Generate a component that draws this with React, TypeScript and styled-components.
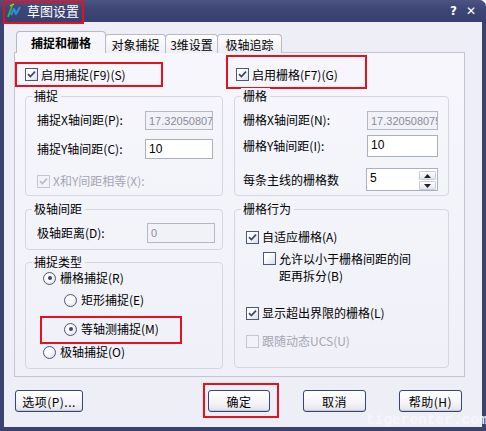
import React from "react";
import styled, { createGlobalStyle, css } from "styled-components";

const Global = createGlobalStyle`
  html, body { margin: 0; padding: 0; background: #ffffff; }
  body { font-family: "Noto Sans CJK SC", "Noto Sans", sans-serif; font-size: 12px; color: #000; }
  * { box-sizing: border-box; }
`;

const FONT = `"Noto Sans CJK SC", "Noto Sans", sans-serif`;

const Window = styled.div`
  position: relative;
  width: 486px;
  height: 431px;
  display: flex;
  flex-direction: column;
  background: #3a4270;
  border-radius: 0 7px 0 0;
  overflow: hidden;
  padding: 0 4px 4px 4px;
`;

const TitleBar = styled.div`
  height: 22px;
  flex: none;
  margin: 0 -4px;
  padding: 0 10px 0 6px;
  display: flex;
  align-items: center;
  background: linear-gradient(#4b5483 0%, #3e4676 40%, #384070 100%);
`;

const TitleGroup = styled.div`
  position: relative;
  display: flex;
  align-items: center;
  gap: 5px;
  height: 16px;
`;

const TitleText = styled.span`
  color: #ffffff;
  font-size: 13px;
  line-height: 16px;
`;

const TitleButtons = styled.div`
  margin-left: auto;
  display: flex;
  gap: 9px;
  color: #ffffff;
  font-family: "DejaVu Sans", sans-serif;
  font-weight: bold;
  font-size: 12px;
`;

const Highlight = styled.span<{ $l: number; $t: number; $w: number; $h: number }>`
  position: absolute;
  left: ${(p) => p.$l}px;
  top: ${(p) => p.$t}px;
  width: ${(p) => p.$w}px;
  height: ${(p) => p.$h}px;
  border: 2px solid #e4121e;
  pointer-events: none;
`;

const Client = styled.div`
  flex: 1;
  background: #eeeef7;
  padding: 9px 17px 0 10px;
  display: flex;
  flex-direction: column;
`;

const TabStrip = styled.div`
  display: flex;
  align-items: flex-end;
  height: 22px;
  padding-left: 2px;
  margin-bottom: -1px;
  position: relative;
  z-index: 1;
`;

const Tab = styled.div<{ $active?: boolean; $w: number }>`
  width: ${(p) => p.$w}px;
  display: flex;
  align-items: center;
  justify-content: center;
  border: 1px solid #b8b8c8;
  border-bottom: none;
  border-radius: 4px 4px 0 0;
  font-size: 12px;
  line-height: 14px;
  padding-top: 1px;
  ${(p) =>
    p.$active
      ? css`
          background: #f5f5fb;
          font-weight: bold;
          height: 22px;
        `
      : css`
          height: 19px;
          background: linear-gradient(#ffffff, #ededf4);
          margin-left: -1px;
        `}
`;

const Panel = styled.div`
  width: 451px;
  height: 325px;
  border: 1px solid #c4c4d0;
  background: linear-gradient(#f6f6fc, #f0f0f8);
  display: grid;
  grid-template-columns: 198px 215px;
  column-gap: 11px;
  padding: 14px 0 0 10px;
  align-content: start;
`;

const Column = styled.div`
  display: flex;
  flex-direction: column;
`;

const Row = styled.div<{ $h: number; $mt?: number; $indent?: number }>`
  position: relative;
  display: flex;
  align-items: center;
  height: ${(p) => p.$h}px;
  margin-top: ${(p) => p.$mt ?? 0}px;
  padding-left: ${(p) => p.$indent ?? 0}px;
  flex: none;
`;

const Group = styled.div<{ $h: number; $mt: number; $pt: number }>`
  position: relative;
  height: ${(p) => p.$h}px;
  margin-top: ${(p) => p.$mt}px;
  padding-top: ${(p) => p.$pt}px;
  border: 1px solid #d6d6e0;
  border-radius: 4px;
  display: flex;
  flex-direction: column;
`;

const Legend = styled.span`
  position: absolute;
  top: -9px;
  left: 6px;
  padding: 0 3px 0 2px;
  background: #f3f3fa;
  font-size: 12px;
  line-height: 16px;
`;

const Label = styled.span<{ $disabled?: boolean }>`
  font-size: 12px;
  line-height: 14px;
  white-space: nowrap;
  color: ${(p) => (p.$disabled ? "#a6a6b4" : "#000")};
`;

const WrapLabel = styled.span`
  font-size: 12px;
  line-height: 17px;
  width: 136px;
  align-self: flex-start;
  margin-top: -1px;
`;

const Field = styled.div<{ $w: number; $h: number; $disabled?: boolean; $mr: number }>`
  margin-left: auto;
  margin-right: ${(p) => p.$mr}px;
  width: ${(p) => p.$w}px;
  height: ${(p) => p.$h}px;
  border: 1px solid ${(p) => (p.$disabled ? "#b4b8c4" : "#a9b0bf")};
  background: ${(p) => (p.$disabled ? "#f1f1f8" : "#ffffff")};
  color: ${(p) => (p.$disabled ? "#8c8c98" : "#000")};
  font-family: "Liberation Sans", Arial, sans-serif;
  font-size: ${(p) => (p.$disabled ? 11 : 12)}px;
  line-height: 16px;
  padding: 1px 0 0 3px;
  overflow: hidden;
  white-space: nowrap;
  display: flex;
  align-items: flex-start;
`;

const SpinWrap = styled.div`
  margin-left: auto;
  display: flex;
  flex-direction: column;
  gap: 1px;
  padding: 1px 1px 1px 0;
`;

const SpinBtn = styled.div`
  width: 17px;
  height: 9px;
  border: 1px solid #c8ccd8;
  border-radius: 1px;
  background: linear-gradient(#ffffff, #e4e4ee);
  display: flex;
  align-items: center;
  justify-content: center;
`;

const Box = styled.span<{ $disabled?: boolean; $top?: boolean }>`
  width: 13px;
  height: 13px;
  flex: none;
  border: 1px solid ${(p) => (p.$disabled ? "#c4c6d2" : "#4b5878")};
  background: ${(p) => (p.$disabled ? "#f2f2f8" : "linear-gradient(135deg, #ffffff 30%, #dcdce8)")};
  display: inline-flex;
  align-items: center;
  justify-content: center;
  margin-right: 3px;
  ${(p) => p.$top && "align-self: flex-start; margin-top: 1px;"}
`;

const Radio = styled.span`
  width: 13px;
  height: 13px;
  flex: none;
  border: 1px solid #4b5878;
  border-radius: 50%;
  background: radial-gradient(circle at 40% 40%, #ffffff 30%, #d4d4e2);
  display: inline-flex;
  align-items: center;
  justify-content: center;
  margin-right: 4px;
`;

const Dot = styled.span`
  width: 4px;
  height: 4px;
  border-radius: 50%;
  background: #3c4966;
`;

const ButtonRow = styled.div`
  display: flex;
  align-items: center;
  margin-top: 13px;
  padding-left: 1px;
`;

const Button = styled.button<{ $w: number; $ml: number }>`
  position: relative;
  width: ${(p) => p.$w}px;
  height: 22px;
  margin-left: ${(p) => p.$ml}px;
  border: 1px solid #36466e;
  border-radius: 3px;
  background: linear-gradient(#ffffff 0%, #f4f4f8 60%, #e2e2ea 100%);
  box-shadow: inset 0 -1px 0 #c6c8d6;
  font-family: ${FONT};
  font-size: 12px;
  color: #000;
  padding: 0;
  display: flex;
  align-items: center;
  justify-content: center;
  letter-spacing: 0.5px;
`;

const Watermark = styled.span`
  position: absolute;
  left: 366px;
  top: 413px;
  font-family: "Liberation Mono", monospace;
  font-size: 14px;
  line-height: 14px;
  font-weight: bold;
  color: rgba(246, 246, 252, 0.95);
  letter-spacing: 0.3px;
  white-space: nowrap;
  pointer-events: none;
`;

const Check = ({ color = "#3a4766" }: { color?: string }) => (
  <svg width="9" height="9" viewBox="0 0 9 9">
    <path d="M1 4.2 L3.4 6.6 L8 1.6" fill="none" stroke={color} strokeWidth="1.7" />
  </svg>
);

const AppIcon = () => (
  <svg width="16" height="16" viewBox="0 0 16 16">
    <path d="M2 14 L6 3" stroke="#3fae3c" strokeWidth="2" fill="none" />
    <path d="M4 3 L8 1" stroke="#7fd04a" strokeWidth="1.5" fill="none" />
    <path d="M5 12 L8 6 L10 11 L14 4" stroke="#2f8ad8" strokeWidth="2.2" fill="none" strokeLinejoin="round" />
  </svg>
);

const Tri = ({ up }: { up?: boolean }) => (
  <svg width="7" height="4" viewBox="0 0 7 4">
    <path d={up ? "M0 4 L3.5 0 L7 4 Z" : "M0 0 L7 0 L3.5 4 Z"} fill="#222" />
  </svg>
);

export default function App() {
  return (
    <>
      <Global />
      <Window>
        <TitleBar>
          <TitleGroup>
            <AppIcon />
            <TitleText>草图设置</TitleText>
            <Highlight $l={-3} $t={-2} $w={81} $h={23} />
          </TitleGroup>
          <TitleButtons>
            <span>?</span>
            <span>✕</span>
          </TitleButtons>
        </TitleBar>
        <Client>
          <TabStrip>
            <Tab $active $w={90}>捕捉和栅格</Tab>
            <Tab $w={61}>对象捕捉</Tab>
            <Tab $w={53}>3维设置</Tab>
            <Tab $w={65}>极轴追踪</Tab>
          </TabStrip>
          <Panel>
            <Column>
              <Row $h={15}>
                <Box><Check /></Box>
                <Label>启用捕捉(F9)(S)</Label>
                <Highlight $l={-10} $t={-5} $w={148} $h={25} />
              </Row>
              <Group $h={100} $mt={14} $pt={13}>
                <Legend>捕捉</Legend>
                <Row $h={20} $indent={11}>
                  <Label>捕捉X轴间距(P):</Label>
                  <Field $w={68} $h={19} $mr={9} $disabled>17.32050807</Field>
                </Row>
                <Row $h={20} $mt={9} $indent={11}>
                  <Label>捕捉Y轴间距(C):</Label>
                  <Field $w={68} $h={20} $mr={9}>10</Field>
                </Row>
                <Row $h={14} $mt={15} $indent={11}>
                  <Box $disabled><Check color="#b8bccc" /></Box>
                  <Label $disabled>X和Y间距相等(X):</Label>
                </Row>
              </Group>
              <Group $h={41} $mt={13} $pt={13}>
                <Legend>极轴间距</Legend>
                <Row $h={20} $indent={11}>
                  <Label>极轴距离(D):</Label>
                  <Field $w={68} $h={20} $mr={7} $disabled>0</Field>
                </Row>
              </Group>
              <Group $h={107} $mt={12} $pt={8}>
                <Legend>捕捉类型</Legend>
                <Row $h={14} $indent={17}>
                  <Radio><Dot /></Radio>
                  <Label>栅格捕捉(R)</Label>
                </Row>
                <Row $h={14} $mt={8} $indent={38}>
                  <Radio />
                  <Label>矩形捕捉(E)</Label>
                </Row>
                <Row $h={14} $mt={15} $indent={38}>
                  <Radio><Dot /></Radio>
                  <Label>等轴测捕捉(M)</Label>
                  <Highlight $l={14} $t={-6} $w={142} $h={28} />
                </Row>
                <Row $h={14} $mt={9} $indent={17}>
                  <Radio />
                  <Label>极轴捕捉(O)</Label>
                </Row>
              </Group>
            </Column>
            <Column>
              <Row $h={15} $indent={2}>
                <Box><Check /></Box>
                <Label>启用栅格(F7)(G)</Label>
                <Highlight $l={-8} $t={-12} $w={141} $h={34} />
              </Row>
              <Group $h={100} $mt={14} $pt={13}>
                <Legend>栅格</Legend>
                <Row $h={20} $indent={8}>
                  <Label>栅格X轴间距(N):</Label>
                  <Field $w={71} $h={19} $mr={10} $disabled>17.320508075</Field>
                </Row>
                <Row $h={22} $mt={5} $indent={8}>
                  <Label>栅格Y轴间距(I):</Label>
                  <Field $w={71} $h={22} $mr={10}>10</Field>
                </Row>
                <Row $h={23} $mt={11} $indent={8}>
                  <Label>每条主线的栅格数</Label>
                  <Field $w={72} $h={23} $mr={10}>
                    <span>5</span>
                    <SpinWrap>
                      <SpinBtn><Tri up /></SpinBtn>
                      <SpinBtn><Tri /></SpinBtn>
                    </SpinWrap>
                  </Field>
                </Row>
              </Group>
              <Group $h={159} $mt={13} $pt={20}>
                <Legend>栅格行为</Legend>
                <Row $h={14} $indent={11}>
                  <Box><Check /></Box>
                  <Label>自适应栅格(A)</Label>
                </Row>
                <Row $h={34} $mt={7} $indent={28}>
                  <Box $top />
                  <WrapLabel>允许以小于栅格间距的间距再拆分(B)</WrapLabel>
                </Row>
                <Row $h={14} $mt={21} $indent={11}>
                  <Box><Check /></Box>
                  <Label>显示超出界限的栅格(L)</Label>
                </Row>
                <Row $h={14} $mt={14} $indent={11}>
                  <Box $disabled />
                  <Label $disabled>跟随动态UCS(U)</Label>
                </Row>
              </Group>
            </Column>
          </Panel>
          <ButtonRow>
            <Button $w={68} $ml={0}>选项(P)...</Button>
            <Button $w={62} $ml={125}>
              确定
              <Highlight $l={-6} $t={-8} $w={76} $h={35} />
            </Button>
            <Button $w={63} $ml={33}>取消</Button>
            <Button $w={63} $ml={33}>帮助(H)</Button>
          </ButtonRow>
        </Client>
        <Watermark>tigerenter.com</Watermark>
      </Window>
    </>
  );
}
